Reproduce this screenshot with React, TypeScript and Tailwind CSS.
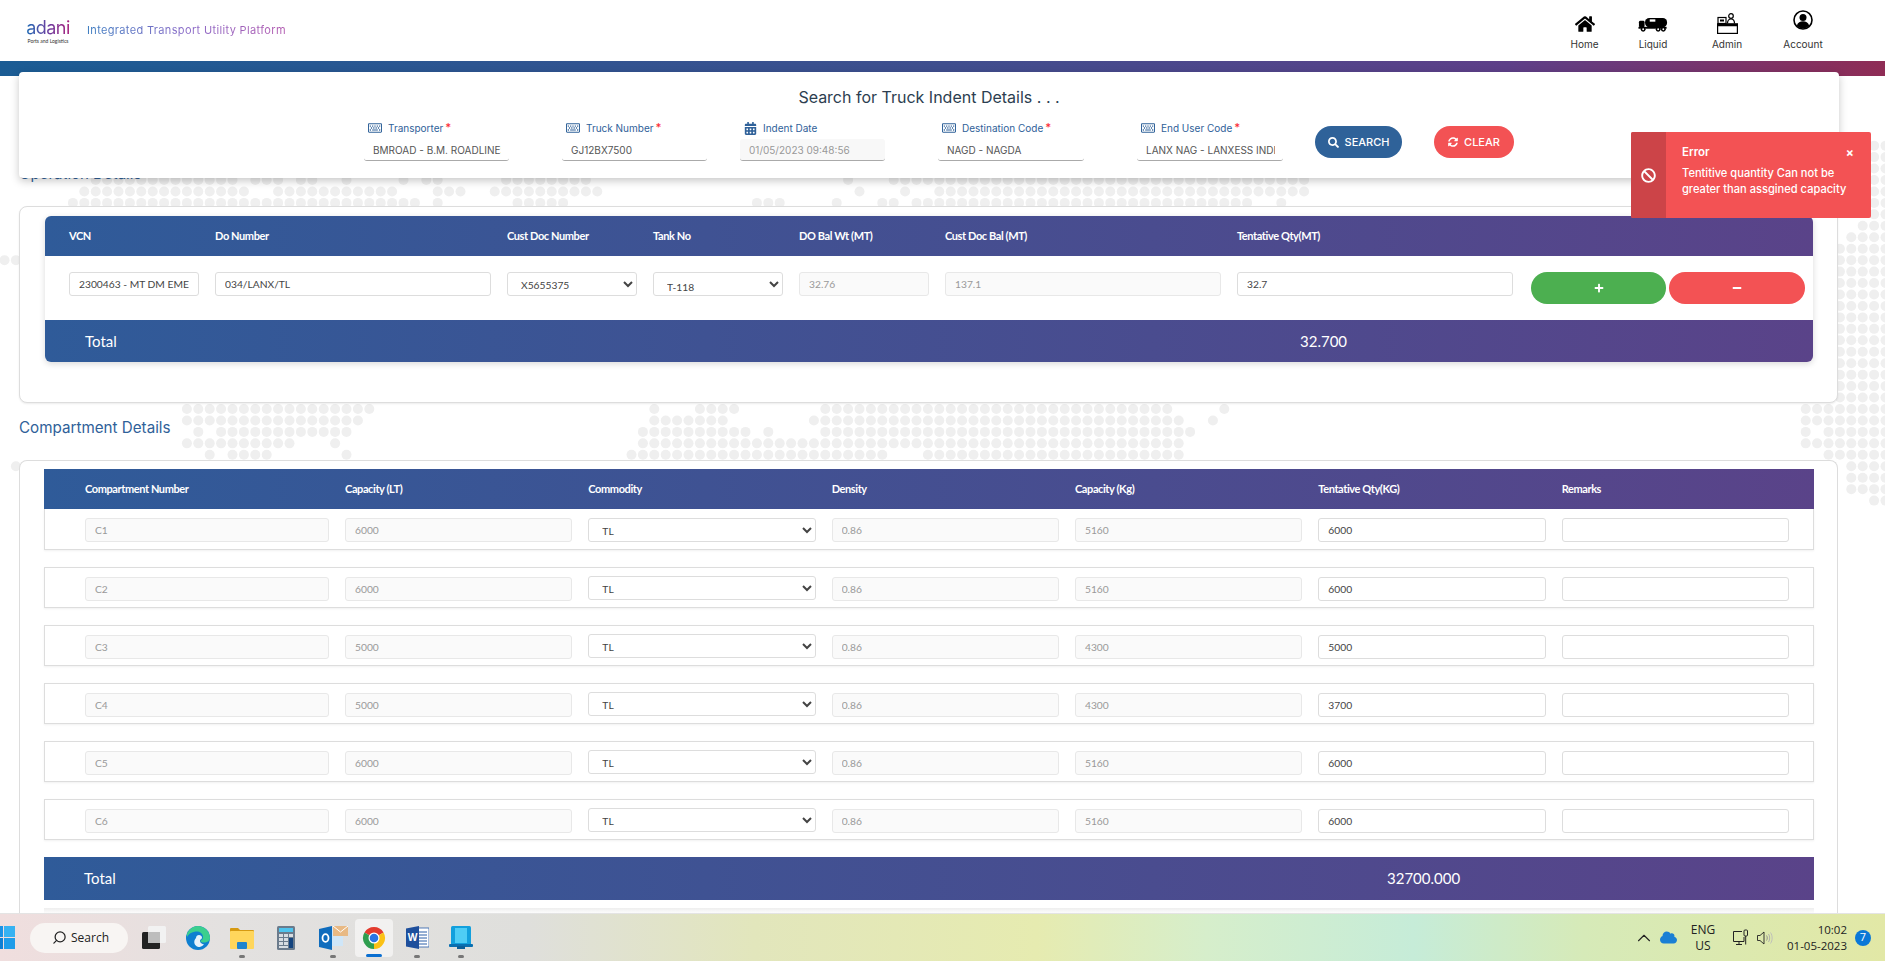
import React from 'react';
import { FaBan, FaCalendarAlt, FaCloud, FaHome, FaMinus, FaPlus, FaRegKeyboard, FaSearch, FaSyncAlt } from 'react-icons/fa';
import { ChevronUp, Search } from 'lucide-react';

const SPANS: [number, [number, number][]][] = [
    [-3, [[1875, 1885]]],
    [-2, [[1875, 1885]]],
    [-1, [[1875, 1885]]],
    [0, [[92, 237], [253, 281], [299, 317], [343, 343], [404, 404], [426, 442], [504, 590], [851, 851], [895, 911], [929, 947], [963, 1302], [1875, 1885]]],
    [1, [[80, 249], [274, 376], [394, 394], [436, 456], [492, 581], [600, 600], [863, 863], [909, 909], [939, 1270], [1284, 1302], [1875, 1885]]],
    [2, [[68, 398], [418, 418], [440, 440], [516, 562], [758, 775], [841, 841], [883, 899], [917, 935], [951, 1245], [1276, 1276], [1875, 1885]]],
    [3, [[1875, 1885]]],
    [4, [[1860, 1885]]],
    [5, [[1850, 1885]]],
    [6, [[1845, 1885]]],
    [7, [[3, 16], [1845, 1885]]],
    ...[8, 9, 10, 11, 12, 13, 14, 15, 16, 17, 18].map((i): [number, [number, number][]] => [i, [[1845, 1885]]]),
    [19, [[1845, 1885]]],
    [20, [[192, 364], [655, 655], [703, 719], [737, 737], [825, 1166], [1228, 1228], [1809, 1885]]],
    [21, [[192, 355], [653, 719], [812, 1178], [1218, 1218], [1809, 1885]]],
    [22, [[198, 198], [219, 343], [640, 743], [772, 772], [825, 1190], [1809, 1809], [1833, 1885]]],
    [23, [[192, 284], [337, 337], [640, 880], [893, 1178], [1809, 1885]]],
    [24, [[210, 210], [228, 272], [349, 349], [629, 823], [835, 880], [926, 1178], [1827, 1885]]],
    [25, [[15, 15], [1855, 1885]]],
    [26, [[1855, 1885]]],
    [27, [[1855, 1885]]],
    [28, [[1875, 1885]]],
];

const poppins = '[font-family:Inter,sans-serif]';

const DotMap = () => {
    const dots: { x: number; y: number }[] = [];
    SPANS.forEach(([row, spans]) => {
        spans.forEach(([a, b]) => {
            for (let k = 0; k < 170; k++) {
                const x = 4.5 + k * 11.4;
                if (x >= a - 5.7 && x <= b + 5.7) dots.push({ x, y: 180 + row * 11.45 });
            }
        });
    });
    return (
        <svg className="absolute inset-0 h-full w-full" aria-hidden="true">
            {dots.map((d, i) => (
                <circle key={i} cx={d.x} cy={d.y} r="5" fill="#efefef" />
            ))}
        </svg>
    );
};

const TruckIcon = () => (
    <svg width="30" height="15" viewBox="0 0 31 16" fill="#000" className="mb-[2px]">
        <rect x="0.5" y="4" width="6" height="7" rx="1.5" />
        <rect x="7" y="1" width="23.5" height="10" rx="4.5" />
        <rect x="12" y="2.5" width="6" height="2.5" fill="#fff" />
        <rect x="0" y="10.5" width="30" height="2" />
        <circle cx="5" cy="13" r="2.6" />
        <circle cx="5" cy="13" r="1" fill="#fff" />
        <circle cx="21" cy="13" r="2.6" />
        <circle cx="21" cy="13" r="1" fill="#fff" />
        <circle cx="26.5" cy="13" r="2.6" />
        <circle cx="26.5" cy="13" r="1" fill="#fff" />
    </svg>
);

const AdminIcon = () => (
    <svg width="21" height="21" viewBox="0 0 21 21" fill="none" stroke="#000" strokeWidth="1.2">
        <rect x="1" y="4.5" width="8" height="6" fill="#fff" />
        <rect x="3" y="6.5" width="4" height="2" fill="#000" stroke="none" />
        <circle cx="14" cy="3" r="2.3" />
        <path d="M10.5 10.5c0-3 1.5-4.5 3.5-4.5s3.500 1.500 3.500 4.500" fill="#fff" />
        <rect x="0.600" y="11" width="19.800" height="9.400" />
        <path d="M0.600 11h19.800v1.600H0.600z" fill="#000" />
    </svg>
);

const AccountIcon = () => (
    <svg width="20" height="20" viewBox="0 0 20 20" className="mb-[4px]">
        <circle cx="10" cy="10" r="9" fill="none" stroke="#000" strokeWidth="1.6" />
        <circle cx="10" cy="7.500" r="3.500" fill="#000" />
        <path d="M3.800 15.500c1-3 3.500-4.200 6.200-4.200s5.200 1.200 6.200 4.200c-1.500 1.800-3.800 3-6.200 3s-4.700-1.200-6.200-3z" fill="#000" />
    </svg>
);

const NAV = [
    { label: 'Home', icon: <FaHome className="mb-[1px] h-[18px] w-[20px] text-black" />, width: 'w-[65px]' },
    { label: 'Liquid', icon: <TruckIcon />, width: 'w-[72px]' },
    { label: 'Admin', icon: <AdminIcon />, width: 'w-[76px]' },
    { label: 'Account', icon: <AccountIcon />, width: 'w-[76px]' },
];

const Header = () => (
    <header className="flex h-[61px] items-center justify-between bg-white pl-[25px] pr-[44px]">
        <div className="flex items-center">
            <div className="flex w-[46px] flex-col items-center pt-[3px]">
                <span className="bg-[linear-gradient(90deg,#1f6cb5,#6b3fa0,#a81f7d)] bg-clip-text text-[18px] leading-[18px] tracking-[-0.5px] text-transparent [font-family:Inter,sans-serif]">
                    adani
                </span>
                <span className="mt-[1px] whitespace-nowrap text-[5px] leading-[7px] text-[#333]">Ports and Logistics</span>
            </div>
            <span className={`ml-[16px] bg-[linear-gradient(90deg,#3b7cc0,#8a6bc8,#b25ab0)] bg-clip-text text-[11px] tracking-[0.35px] text-transparent ${poppins}`}>
                Integrated Transport Utility Platform
            </span>
        </div>
        <nav className="flex">
            {NAV.map((n) => (
                <div key={n.label} className={`flex ${n.width} flex-col items-center`}>
                    <div className="flex h-[24px] items-end">{n.icon}</div>
                    <span className={`mt-[3px] text-[10px] leading-[14px] text-[#333] ${poppins}`}>{n.label}</span>
                </div>
            ))}
        </nav>
    </header>
);

const SearchField = ({ label, value, required, date, width }: { label: string; value: string; required?: boolean; date?: boolean; width: string }) => (
    <div className={`flex ${width} flex-col`}>
        <div className="flex h-[16px] items-center pl-[4px]">
            {date ? <FaCalendarAlt className="h-[13px] w-[13px] text-[#2f6199]" /> : <FaRegKeyboard className="h-[14px] w-[14px] text-[#2f6199]" />}
            <span className={`ml-[6px] whitespace-nowrap text-[10px] text-[#2f6199] ${poppins}`}>{label}</span>
            {required && <span className="ml-[2px] text-[14px] font-bold leading-[12px] text-red-500">*</span>}
        </div>
        <input
            readOnly
            defaultValue={value}
            className={`mt-[3px] h-[22px] w-full rounded-[3px] border-b border-[#aaa] pl-[9px] pr-[8px] text-[10px] outline-none ${poppins} ${date ? 'bg-[#f8f8f8] text-[#999]' : 'text-[#555]'}`}
        />
    </div>
);

const SearchCard = () => (
    <section className="relative z-10 -mt-[4px] ml-[19px] h-[106px] w-[1820px] rounded-[4px] bg-white pt-[13px] shadow-[0_3px_8px_rgba(0,0,0,0.22)]">
        <h2 className={`text-center text-[16px] leading-[24px] text-[#2c3e50] ${poppins}`}>Search for Truck Indent Details . . .</h2>
        <div className="mt-[11px] flex pl-[345px]">
            <SearchField label="Transporter" value="BMROAD - B.M. ROADLINES" required width="w-[145px]" />
            <div className="ml-[53px]">
                <SearchField label="Truck Number" value="GJ12BX7500" required width="w-[145px]" />
            </div>
            <div className="ml-[33px]">
                <SearchField label="Indent Date" value="01/05/2023 09:48:56" date width="w-[145px]" />
            </div>
            <div className="ml-[53px]">
                <SearchField label="Destination Code" value="NAGD - NAGDA" required width="w-[146px]" />
            </div>
            <div className="ml-[53px]">
                <SearchField label="End User Code" value="LANX NAG - LANXESS INDIA" required width="w-[146px]" />
            </div>
            <button className={`ml-[32px] mt-[6px] flex h-[32px] w-[87px] items-center justify-center rounded-full bg-[#2f6299] text-[11px] font-medium text-white ${poppins}`}>
                <FaSearch className="mr-[6px] h-[11px] w-[11px]" />
                SEARCH
            </button>
            <button className={`ml-[32px] mt-[6px] flex h-[32px] w-[80px] items-center justify-center rounded-full bg-[#f35254] text-[11px] font-medium text-white ${poppins}`}>
                <FaSyncAlt className="mr-[6px] h-[10px] w-[10px]" />
                CLEAR
            </button>
        </div>
    </section>
);

const cellInput = 'h-[24px] w-full rounded-[3px] border px-[9px] text-[10.25px] outline-none';
const disabledInput = `${cellInput} border-[#e8e8e8] bg-[#fafafa] text-[#999]`;
const activeInput = `${cellInput} border-[#ddd] bg-white text-[#444]`;
const selectInput = 'h-[24px] w-full rounded-[3px] border border-[#ddd] bg-white pl-[9px] text-[10.25px] text-[#444] outline-none';

const OperationCard = () => (
    <section className="mt-[22px] ml-[19px] h-[197px] w-[1819px] rounded-[8px] border border-[#ddd] bg-white pl-[25px] pt-[9px] shadow-[0_1px_2px_rgba(0,0,0,0.08)]">
        <div className="w-[1768px] rounded-[6px] shadow-[0_2px_6px_rgba(0,0,0,0.15)]">
            <div className="grid h-[40px] grid-cols-[130px_276px_130px_130px_130px_276px_276px] items-center gap-x-[16px] rounded-t-[6px] bg-[linear-gradient(90deg,#2f5b99,#5a4389)] pl-[24px] text-[11px] font-bold tracking-[-0.4px] text-white">
                <span>VCN</span>
                <span>Do Number</span>
                <span>Cust Doc Number</span>
                <span>Tank No</span>
                <span>DO Bal Wt (MT)</span>
                <span>Cust Doc Bal (MT)</span>
                <span>Tentative Qty(MT)</span>
            </div>
            <div className="grid h-[64px] grid-cols-[130px_276px_130px_130px_130px_276px_276px] gap-x-[16px] bg-white pl-[24px] pt-[16px]">
                <input readOnly defaultValue="2300463 - MT DM EME" className={activeInput} />
                <input readOnly defaultValue="034/LANX/TL" className={activeInput} />
                <select defaultValue="X5655375" className={`${selectInput} pt-[2px]`}>
                    <option>X5655375</option>
                </select>
                <select defaultValue="T-118" className={`${selectInput} pt-[5px]`}>
                    <option>T-118</option>
                </select>
                <input readOnly defaultValue="32.76" className={disabledInput} />
                <input readOnly defaultValue="137.1" className={disabledInput} />
                <input readOnly defaultValue="32.7" className={activeInput} />
            </div>
            <div className="-mt-[48px] mb-[16px] flex h-[32px] justify-end gap-[3px] pr-[8px]">
                <button aria-label="Add" className="flex w-[135px] items-center justify-center rounded-full bg-[#4caf50] text-white">
                    <FaPlus className="h-[10px] w-[10px]" />
                </button>
                <button aria-label="Remove" className="flex w-[136px] items-center justify-center rounded-full bg-[#f35254] text-white">
                    <FaMinus className="h-[10px] w-[10px]" />
                </button>
            </div>
            <div className="flex h-[42px] items-center rounded-b-[6px] bg-[linear-gradient(90deg,#2f5b99,#5a4389)] pl-[40px] text-[15px] text-white">
                <span className="w-[1215px]">Total</span>
                <span>32.700</span>
            </div>
        </div>
    </section>
);

const HEADS = ['Compartment Number', 'Capacity (LT)', 'Commodity', 'Density', 'Capacity (Kg)', 'Tentative Qty(KG)', 'Remarks'];

const ROWS = [
    { name: 'C1', cap: '6000', kg: '5160', qty: '6000' },
    { name: 'C2', cap: '6000', kg: '5160', qty: '6000' },
    { name: 'C3', cap: '5000', kg: '4300', qty: '5000' },
    { name: 'C4', cap: '5000', kg: '4300', qty: '3700' },
    { name: 'C5', cap: '6000', kg: '5160', qty: '6000' },
    { name: 'C6', cap: '6000', kg: '5160', qty: '6000' },
];

const CompartmentCard = () => (
    <section className="mt-[22px] ml-[19px] w-[1819px] rounded-t-[8px] border border-b-0 border-[#ddd] bg-white pl-[24px] pt-[8px]">
        <div className="w-[1770px]">
            <div className="grid h-[40px] grid-cols-[260px_repeat(6,1fr)] items-center bg-[linear-gradient(90deg,#2f5b99,#5a4389)] pl-[33px] pr-[17px] text-[11px] font-bold tracking-[-0.4px] text-white">
                {HEADS.map((h) => (
                    <span key={h} className="px-[8px]">{h}</span>
                ))}
            </div>
            <div className="flex flex-col gap-[17px]">
                {ROWS.map((r) => (
                    <div key={r.name} className="grid h-[41px] grid-cols-[260px_repeat(6,1fr)] items-center border border-t-0 border-[#ddd] bg-white pl-[32px] pr-[16px] shadow-[0_1px_2px_rgba(0,0,0,0.06)] not-first:border-t">
                        <div className="px-[8px]"><input readOnly defaultValue={r.name} className={disabledInput} /></div>
                        <div className="px-[8px]"><input readOnly defaultValue={r.cap} className={disabledInput} /></div>
                        <div className="px-[8px]">
                            <select defaultValue="TL" className={`${selectInput} pt-[2px]`}>
                                <option>TL</option>
                            </select>
                        </div>
                        <div className="px-[8px]"><input readOnly defaultValue="0.86" className={disabledInput} /></div>
                        <div className="px-[8px]"><input readOnly defaultValue={r.kg} className={disabledInput} /></div>
                        <div className="px-[8px]"><input readOnly defaultValue={r.qty} className={activeInput} /></div>
                        <div className="px-[8px]"><input readOnly className={activeInput} /></div>
                    </div>
                ))}
            </div>
            <div className="mt-[17px] flex h-[43px] items-center bg-[linear-gradient(90deg,#2f5b99,#5a4389)] pl-[40px] text-[15px] text-white">
                <span className="w-[1303px]">Total</span>
                <span>32700.000</span>
            </div>
            <div className="mt-[8px] h-[6px] bg-[linear-gradient(180deg,#eee,#fff)]" />
        </div>
    </section>
);

const Toast = () => (
    <div className={`absolute left-[1631px] top-[132px] z-20 flex h-[86px] w-[240px] rounded-[2px] bg-[#f35254] text-white ${poppins}`}>
        <div className="flex w-[35px] items-center justify-center rounded-l-[2px] bg-[#cc4448]">
            <FaBan className="h-[15px] w-[15px]" />
        </div>
        <div className="relative flex-1 pl-[16px] pt-[12px] text-[11.100px] font-medium leading-[16px]">
            <div className="text-[11.500px] font-semibold">Error</div>
            <div className="mt-[5px] w-[188px]">Tentitive quantity Can not be greater than assgined capacity</div>
            <span className="absolute right-[17px] top-[14px] text-[12px] font-bold leading-[14px]">×</span>
        </div>
    </div>
);

const WindowsLogo = () => (
    <svg width="23" height="23" viewBox="0 0 23 23" className="-ml-[8px]">
        <rect width="11" height="11" fill="#1b93e6" />
        <rect x="12" width="11" height="11" fill="#37b2f2" />
        <rect y="12" width="11" height="11" fill="#0f7fd4" />
        <rect x="12" y="12" width="11" height="11" fill="#1f9ce9" />
    </svg>
);

const TaskView = () => (
    <svg width="24" height="23" viewBox="0 0 24 23">
        <rect x="0" y="6" width="18" height="17" rx="1.500" fill="#222" />
        <rect x="6" y="0" width="18" height="17" rx="1.500" fill="#f2f2f2" />
        <rect x="6" y="6" width="12" height="11" fill="#bdbdbd" />
    </svg>
);

const EdgeIcon = () => (
    <svg width="24" height="24" viewBox="0 0 24 24">
        <circle cx="12" cy="12" r="12" fill="#0f7fd0" />
        <path d="M1 8C3 3 7 0 12 0c6 0 12 5 12 12 0 3-3 4.500-6 4.500-2 0-3.500-.6-4-1.500 2-1 3-2 3-4C17 7 13 5 9.500 5.500 5.500 6 2.500 8 1 11z" fill="#3ccf8e" />
        <path d="M10 12c0-2 1.500-3 3-3s3 1 3 2.500c0 1-.8 2-2 2.500-.5 2 1 4 4 4.500-2 2-4 2.500-5.500 2.500C8 20 7 15 10 12z" fill="#fff" opacity="0.9" />
    </svg>
);

const FolderIcon = () => (
    <svg width="24" height="22" viewBox="0 0 24 22">
        <path d="M0 2a1 1 0 0 1 1-1h7l2 2h13a1 1 0 0 1 1 1v3H0z" fill="#d69a12" />
        <rect y="4" width="24" height="18" rx="1" fill="#ffd65c" />
        <rect x="7" y="15" width="10" height="7" rx="1" fill="#1f84cf" />
    </svg>
);

const CalcIcon = () => (
    <svg width="18" height="24" viewBox="0 0 18 24">
        <rect width="18" height="24" rx="1.500" fill="#6b7b8c" />
        <rect x="2" y="2" width="14" height="4" fill="#4fc4ee" />
        {[8, 12, 16].map((y) =>
            [2, 7].map((x) => <rect key={`${x}${y}`} x={x} y={y} width="4" height="3" fill="#d8dde2" />)
        )}
        <rect x="12" y="8" width="4" height="3" fill="#d8dde2" />
        <rect x="12" y="12" width="4" height="10" fill="#14447f" />
        <rect x="2" y="20" width="9" height="2" fill="#d8dde2" />
    </svg>
);

const OutlookIcon = () => (
    <svg width="29" height="24" viewBox="0 0 29 24">
        <rect x="10" y="3" width="14" height="17" fill="#cfe6f8" />
        <path d="M0 3l13-3v24L0 21z" fill="#0f6cbd" />
        <ellipse cx="6.500" cy="12" rx="3" ry="3.800" fill="none" stroke="#fff" strokeWidth="1.800" />
        <rect x="14" y="0" width="15" height="10" fill="#e8b984" />
        <path d="M14 0l7.500 6L29 0" fill="none" stroke="#fff" strokeWidth="1" />
    </svg>
);

const ChromeIcon = () => (
    <svg width="24" height="24" viewBox="0 0 24 24">
        <path d="M12 12L2.470 6.500A11 11 0 0 1 21.530 6.500Z" fill="#e33b2e" />
        <path d="M12 12L21.530 6.500A11 11 0 0 1 12 23Z" fill="#fbc116" />
        <path d="M12 12L12 23A11 11 0 0 1 2.470 6.500Z" fill="#2f9e4f" />
        <circle cx="12" cy="12" r="5.500" fill="#fff" />
        <circle cx="12" cy="12" r="4.300" fill="#2b74e4" />
    </svg>
);

const WordIcon = () => (
    <svg width="23" height="23" viewBox="0 0 23 23">
        <rect x="9" y="2" width="14" height="19" fill="#fff" stroke="#2b5ea8" strokeWidth="0.800" />
        <path d="M13 6h8M13 9h8M13 12h8M13 15h8M13 18h8" stroke="#2b5ea8" strokeWidth="1" />
        <path d="M0 2.500L13 0v23L0 20.500z" fill="#1e4f9c" />
        <text x="6.500" y="15" textAnchor="middle" fontSize="10" fontWeight="700" fill="#fff" fontFamily="Open Sans, sans-serif">W</text>
    </svg>
);

const DeviceIcon = () => (
    <svg width="24" height="24" viewBox="0 0 24 24">
        <rect x="2" y="0" width="20" height="19" rx="1.500" fill="#12a0dd" />
        <rect x="6" y="2" width="12" height="15" fill="#4fcdf5" />
        <rect x="0" y="18" width="24" height="3" rx="1" fill="#0a6fb0" />
        <rect x="8" y="20" width="8" height="3" fill="#0d5f99" />
    </svg>
);

const NetworkIcon = () => (
    <svg width="16" height="17" viewBox="0 0 16 17" fill="none" stroke="#222" strokeWidth="1">
        <path d="M9 2.500H.5v10H11V8" />
        <path d="M6 12.500v3M3 15.500h6" />
        <rect x="11" y="1" width="3.500" height="6" rx="1" />
        <path d="M12.700 7v8.500" />
    </svg>
);

const SpeakerIcon = () => (
    <svg width="16" height="14" viewBox="0 0 16 14" fill="none" stroke="#222" strokeWidth="0.900">
        <path d="M.5 4.500h2.500L7 1v12L3 9.500H.5z" />
        <path d="M9.500 4.500c1 1.500 1 3.500 0 5" stroke="#888" />
        <path d="M11.500 3c1.600 2.400 1.600 5.600 0 8" stroke="#aaa" />
        <path d="M13.500 1.500c2.200 3.300 2.200 7.700 0 11" stroke="#bbb" />
    </svg>
);

const sysFont = '[font-family:"Open_Sans",sans-serif]';

const AppDot = ({ icon, active, dot, width }: { icon: React.ReactNode; active?: boolean; dot?: boolean; width: string }) => (
    <div className={`relative flex h-[38px] ${width} items-center justify-center rounded-[4px] ${active ? 'bg-white/55' : ''}`}>
        {icon}
        {dot && <span className="absolute bottom-[-1px] left-1/2 h-[3px] w-[6px] -translate-x-1/2 rounded-full bg-[#777]" />}
        {active && <span className="absolute bottom-[0px] left-1/2 h-[3px] w-[16px] -translate-x-1/2 rounded-full bg-[#0a6fd1]" />}
    </div>
);

const Taskbar = () => (
    <footer className={`relative z-30 flex h-[48px] shrink-0 items-center justify-between border-t border-[#e4e4e4] bg-[linear-gradient(90deg,#f0dede_0%,#e3e1e0_12%,#dfdfdc_28%,#e2e6bc_40%,#e6ebb0_55%,#d6eecb_64%,#c6ecd8_75%,#d6eab8_84%,#e2e8a6_100%)] ${sysFont}`}>
        <div className="flex items-center">
            <WindowsLogo />
            <div className="ml-[15px] flex h-[30px] w-[98px] items-center rounded-full bg-[#f8f5f3] pl-[22px] text-[12px] text-[#222]">
                <Search className="h-[15px] w-[15px] -scale-x-100 text-[#222]" />
                <span className="ml-[4px]">Search</span>
            </div>
            <div className="ml-[14px] flex h-[38px] w-[24px] items-center justify-center"><TaskView /></div>
            <AppDot icon={<EdgeIcon />} width="w-[24px] ml-[20px]" />
            <AppDot icon={<FolderIcon />} dot width="w-[24px] ml-[20px]" />
            <AppDot icon={<CalcIcon />} width="w-[24px] ml-[20px]" />
            <AppDot icon={<OutlookIcon />} dot width="w-[30px] ml-[20px]" />
            <AppDot icon={<ChromeIcon />} active width="w-[38px] ml-[7px]" />
            <AppDot icon={<WordIcon />} dot width="w-[24px] ml-[12px]" />
            <AppDot icon={<DeviceIcon />} dot width="w-[24px] ml-[20px]" />
        </div>
        <div className="flex items-center pr-[14px] text-[#222]">
            <ChevronUp className="h-[22px] w-[22px]" strokeWidth={1.200} />
            <FaCloud className="ml-[5px] h-[15px] w-[17px] text-[#1a7fd4]" />
            <div className="ml-[12px] flex w-[28px] flex-col items-center text-[12px] leading-[16px]">
                <span>ENG</span>
                <span>US</span>
            </div>
            <div className="ml-[16px]"><NetworkIcon /></div>
            <div className="ml-[8px]"><SpeakerIcon /></div>
            <div className="ml-[14px] flex flex-col items-end text-[11.500px] leading-[16px]">
                <span>10:02</span>
                <span>01-05-2023</span>
            </div>
            <span className="ml-[8px] flex h-[16px] w-[16px] items-center justify-center rounded-full bg-[#0a78d7] text-[11px] text-white">7</span>
        </div>
    </footer>
);

export default function App() {
    return (
        <div className="relative flex h-screen flex-col overflow-hidden bg-white [font-family:Lato,sans-serif]">
            <DotMap />
            <Toast />
            <main className="relative flex-1 overflow-hidden">
                <Header />
                <div className="h-[15px] bg-[linear-gradient(90deg,#1b5c94,#3f4e8e_50%,#5d3f88_80%,#8f2c55)]" />
                <SearchCard />
                <h3 className={`-mt-[14px] ml-[19px] text-[15px] leading-[20px] text-[#2f6199] ${poppins}`}>Operation Details</h3>
                <OperationCard />
                <h3 className={`mt-[15px] ml-[19px] text-[15.200px] leading-[20px] text-[#2f6199] ${poppins}`}>Compartment Details</h3>
                <CompartmentCard />
            </main>
            <Taskbar />
        </div>
    );
}
